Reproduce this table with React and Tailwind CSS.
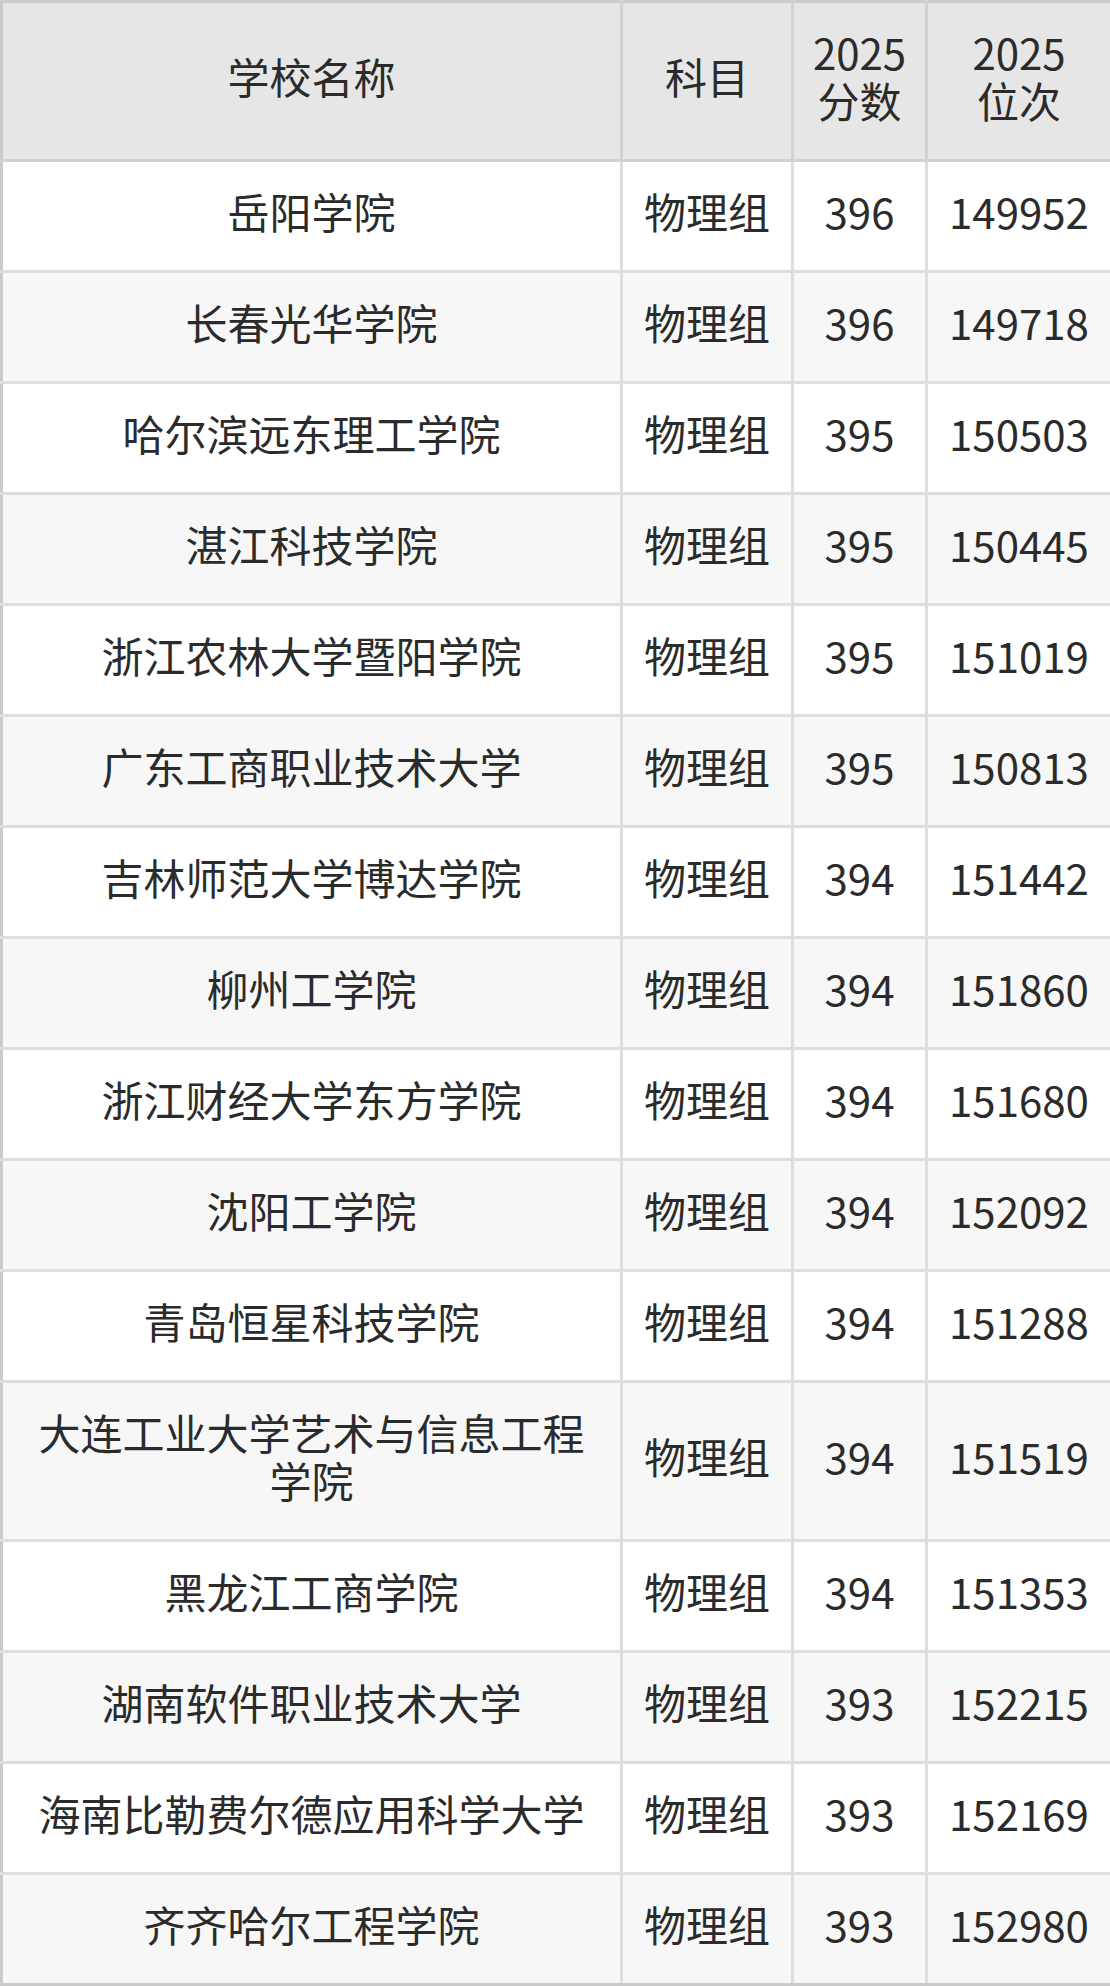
const rows = [
  ["岳阳学院", "物理组", "396", "149952"],
  ["长春光华学院", "物理组", "396", "149718"],
  ["哈尔滨远东理工学院", "物理组", "395", "150503"],
  ["湛江科技学院", "物理组", "395", "150445"],
  ["浙江农林大学暨阳学院", "物理组", "395", "151019"],
  ["广东工商职业技术大学", "物理组", "395", "150813"],
  ["吉林师范大学博达学院", "物理组", "394", "151442"],
  ["柳州工学院", "物理组", "394", "151860"],
  ["浙江财经大学东方学院", "物理组", "394", "151680"],
  ["沈阳工学院", "物理组", "394", "152092"],
  ["青岛恒星科技学院", "物理组", "394", "151288"],
  ["大连工业大学艺术与信息工程学院", "物理组", "394", "151519"],
  ["黑龙江工商学院", "物理组", "394", "151353"],
  ["湖南软件职业技术大学", "物理组", "393", "152215"],
  ["海南比勒费尔德应用科学大学", "物理组", "393", "152169"],
  ["齐齐哈尔工程学院", "物理组", "393", "152980"],
];

const headCell =
  "border-[3px] border-[#d2d2d2] border-t-[#cbcbcb] bg-[#e6e6e6] pt-[25px] pb-[35px] px-0 font-normal align-middle";
const bodyCell = "border-[3px] border-[#dedede] pt-[25px] pb-[35px] align-middle";

export default function App() {
  return (
    <div
      className="w-[1110px] bg-white text-[#2b2b2b] text-[42px] leading-[48px]"
      style={{ fontFamily: '"Noto Sans CJK SC", "Noto Sans", sans-serif' }}
    >
      <table className="w-[1110px] table-fixed border-collapse text-center">
        <colgroup>
          <col className="w-[620px]" />
          <col className="w-[171px]" />
          <col className="w-[134px]" />
          <col className="w-[185px]" />
        </colgroup>
        <thead>
          <tr>
            <th className={`${headCell} border-l-[#cbcbcb]`}>学校名称</th>
            <th className={headCell}>科目</th>
            <th className={headCell}>
              2025
              <br />
              分数
            </th>
            <th className={`${headCell} border-r-[#cbcbcb]`}>
              2025
              <br />
              位次
            </th>
          </tr>
        </thead>
        <tbody>
          {rows.map((r, i) => {
            const last = i === rows.length - 1;
            const bottom = last ? "border-b-[#cbcbcb]" : "";
            return (
              <tr key={r[0]} className={i % 2 === 1 ? "bg-[#f7f7f7]" : "bg-white"}>
                <td className={`${bodyCell} px-[30px] border-l-[#cbcbcb] ${bottom}`}>{r[0]}</td>
                <td className={`${bodyCell} px-0 ${bottom}`}>{r[1]}</td>
                <td className={`${bodyCell} px-0 ${bottom}`}>{r[2]}</td>
                <td className={`${bodyCell} px-0 border-r-[#cbcbcb] ${bottom}`}>{r[3]}</td>
              </tr>
            );
          })}
        </tbody>
      </table>
    </div>
  );
}
